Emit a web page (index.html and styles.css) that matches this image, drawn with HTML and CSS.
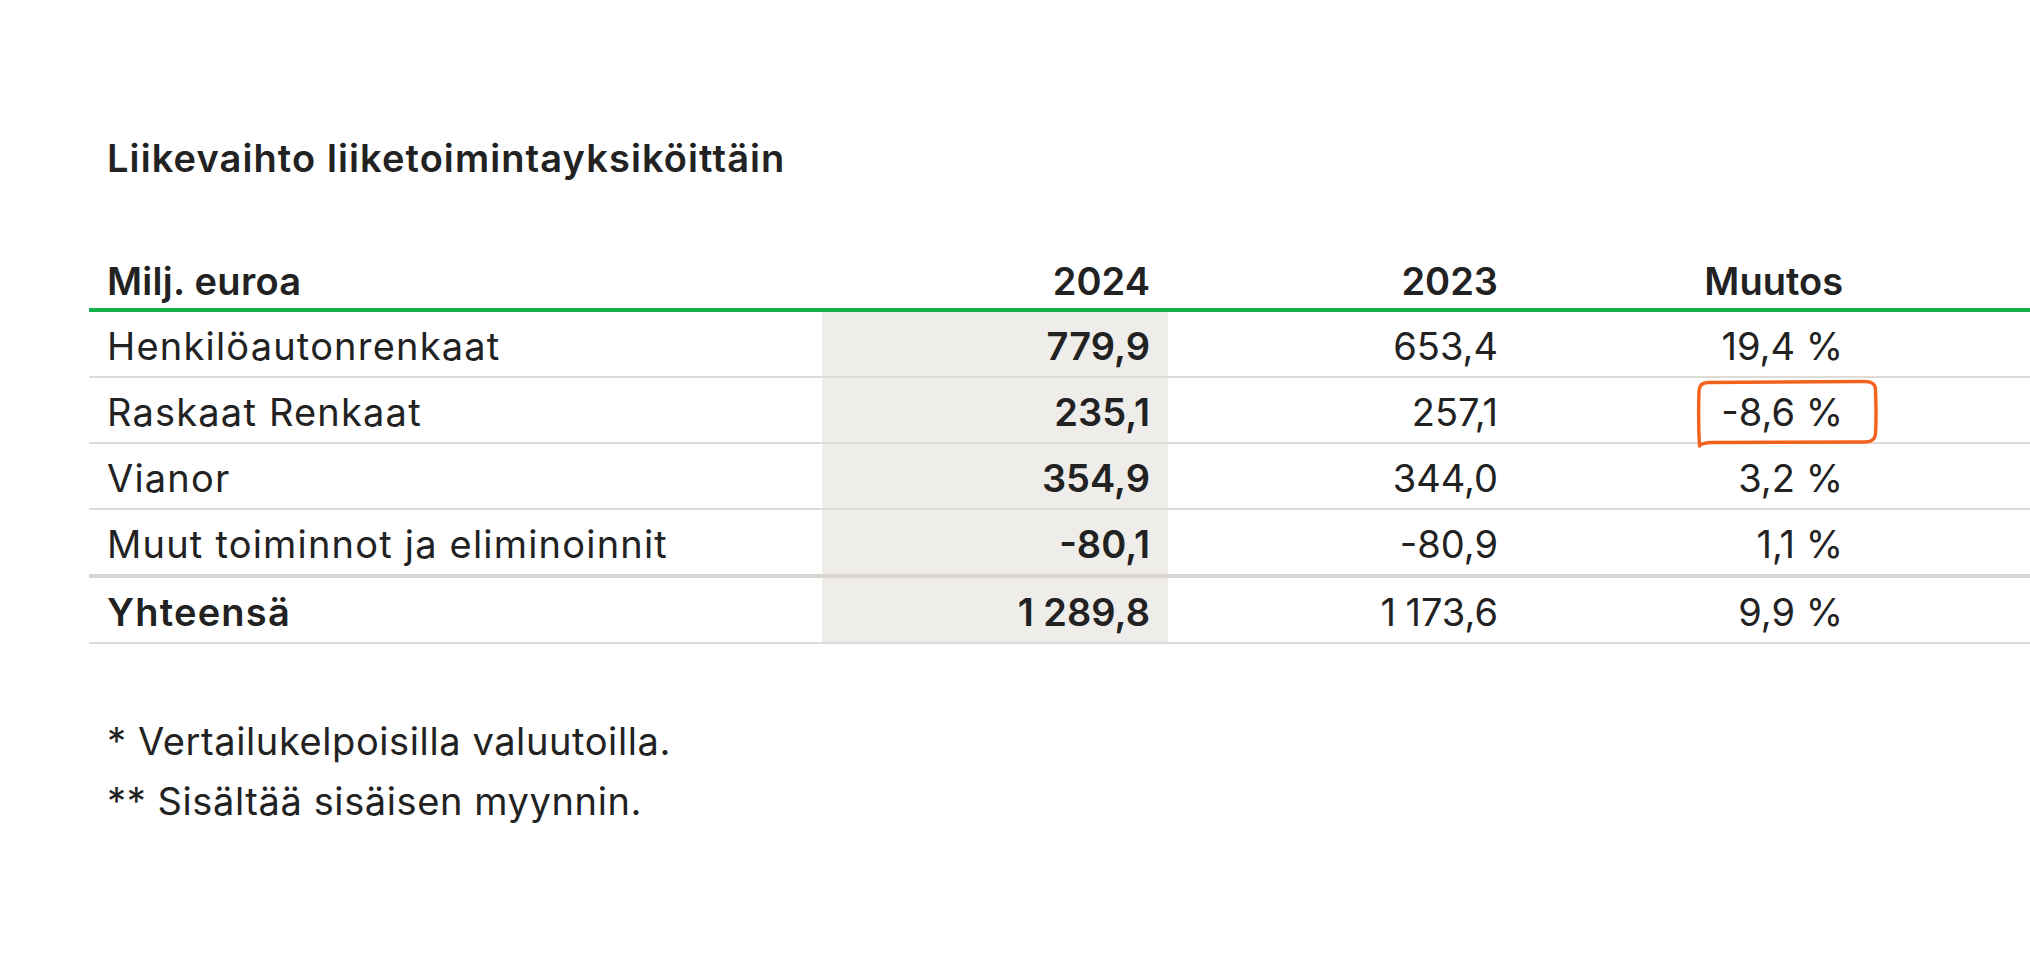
FILE: index.html
```html
<!DOCTYPE html>
<html lang="fi">
<head>
<meta charset="utf-8">
<title>Liikevaihto liiketoimintayksiköittäin</title>
<link rel="stylesheet" href="styles.css">
</head>
<body>
<main class="page">
  <h2 class="title">Liikevaihto liiketoimintayksiköittäin</h2>
  <table class="data">
    <colgroup>
      <col class="c-label">
      <col class="c-num">
      <col class="c-num2">
      <col class="c-chg">
      <col>
    </colgroup>
    <thead>
      <tr>
        <th class="label">Milj. euroa</th>
        <th class="num">2024</th>
        <th class="num">2023</th>
        <th class="num">Muutos</th>
        <th></th>
      </tr>
    </thead>
    <tbody>
      <tr>
        <td class="label">Henkilöautonrenkaat</td>
        <td class="num cur">779,9</td>
        <td class="num">653,4</td>
        <td class="num">19,4 %</td>
        <td></td>
      </tr>
      <tr>
        <td class="label">Raskaat Renkaat</td>
        <td class="num cur">235,1</td>
        <td class="num">257,1</td>
        <td class="num marked">-8,6 %<svg class="circle" width="190" height="70" viewBox="0 0 190 70" aria-hidden="true"><path d="M4.5,67 C3.5,50 3.5,28 4,12 C4.2,6 7,3.5 13,3.5 L168,2.5 C176,2.3 180,4 180.5,10 C181,24 181.5,40 180.5,55 C180,61 176,63 169,63 L18,63.5 C10,63.6 6,64.5 4.5,67" fill="none" stroke="#f2621c" stroke-width="3.4" stroke-linecap="round" stroke-linejoin="round"/></svg></td>
        <td></td>
      </tr>
      <tr>
        <td class="label">Vianor</td>
        <td class="num cur">354,9</td>
        <td class="num">344,0</td>
        <td class="num">3,2 %</td>
        <td></td>
      </tr>
      <tr class="before-total">
        <td class="label">Muut toiminnot ja eliminoinnit</td>
        <td class="num cur">-80,1</td>
        <td class="num">-80,9</td>
        <td class="num">1,1 %</td>
        <td></td>
      </tr>
      <tr class="total">
        <td class="label">Yhteensä</td>
        <td class="num cur">1&#8197;289,8</td>
        <td class="num">1&#8197;173,6</td>
        <td class="num">9,9 %</td>
        <td></td>
      </tr>
    </tbody>
  </table>
  <div class="notes">
    <p>* Vertailukelpoisilla valuutoilla.</p>
    <p>** Sisältää sisäisen myynnin.</p>
  </div>
</main>
</body>
</html>
```
FILE: styles.css
```css
html, body {
  margin: 0;
  padding: 0;
  background: #ffffff;
}

body {
  font-family: Inter, "Liberation Sans", sans-serif;
  color: #222222;
}

.page {
  padding-top: 135px;
  padding-left: 89px;
}

.title {
  margin: 0 0 77px 18px;
  font-size: 38px;
  line-height: 46px;
  font-weight: 600;
  letter-spacing: 1.1px;
}

.data {
  width: 100%;
  border-collapse: collapse;
  table-layout: fixed;
  font-size: 38px;
  line-height: 46px;
}

.c-label { width: 733px; }
.c-num { width: 346px; }
.c-num2 { width: 348px; }
.c-chg { width: 345px; }

.data th {
  font-weight: 600;
  text-align: left;
  padding: 0 0 4px 0;
  border-bottom: 4px solid #14b04a;
}

.data td {
  padding: 11px 0 7px 0;
  border-bottom: 2px solid #dedbd7;
}

.data .label {
  padding-left: 18px;
  text-align: left;
  letter-spacing: 1.2px;
}

.data th.label {
  letter-spacing: 0.3px;
}

.data .num {
  text-align: right;
  padding-right: 18px;
}

.data td.cur {
  background: #eeedea;
  font-weight: 600;
}

.data tr.before-total td {
  border-bottom: 4px solid #d9d4ce;
}

.data tr.total .label {
  font-weight: 600;
}

.marked {
  position: relative;
}

.circle {
  position: absolute;
  left: 179px;
  top: 1px;
}

.notes {
  margin-top: 67px;
  padding-left: 18px;
  font-size: 38px;
  line-height: 60px;
  letter-spacing: 0.6px;
}

.notes p {
  margin: 0;
}
```
